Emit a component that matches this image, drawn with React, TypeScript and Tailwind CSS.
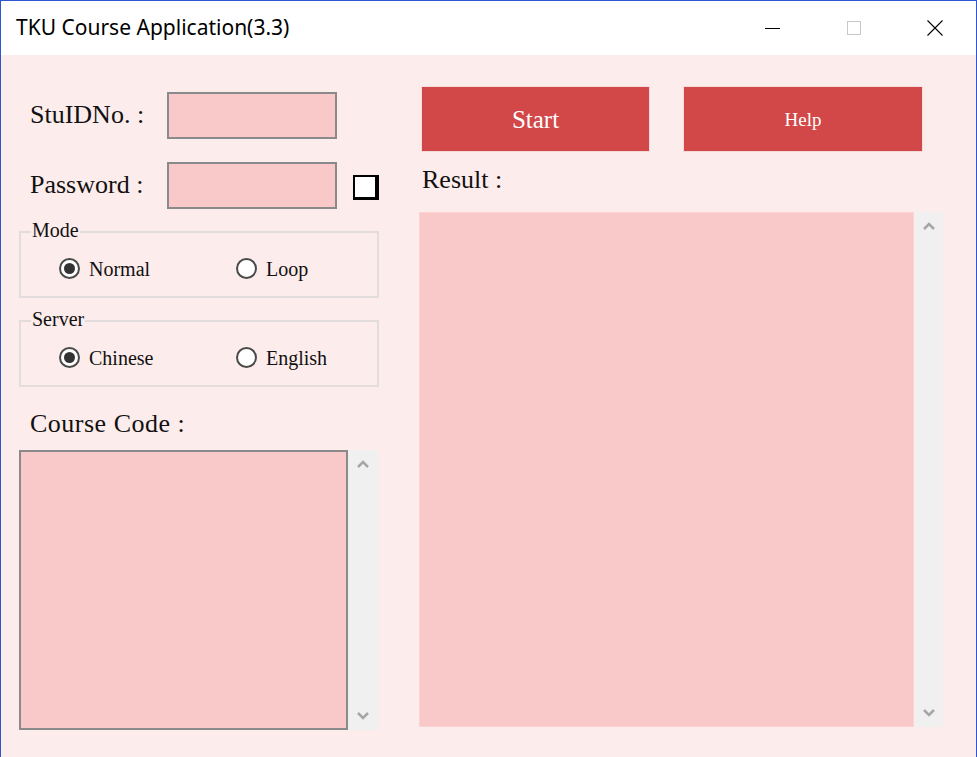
import React from "react";

const serif = { fontFamily: '"Liberation Serif", "Times New Roman", serif' };

function Radio({ checked, label }: { checked?: boolean; label: string }) {
  return (
    <div className="flex items-center">
      <div className="w-[21px] h-[21px] rounded-full border-2 border-[#4a4a4a] bg-white flex items-center justify-center">
        {checked && <div className="w-[11px] h-[11px] rounded-full bg-[#333333]" />}
      </div>
      <span className="ml-[9px] text-[20px] text-[#111] leading-none" style={serif}>
        {label}
      </span>
    </div>
  );
}

function Group({ title, a, b }: { title: string; a: string; b: string }) {
  return (
    <div className="relative h-[67px] border-2 border-[#e2dcdc]">
      <span
        className="absolute -top-[15px] left-[10px] bg-[#fdecec] px-[1px] text-[20px] leading-[24px] text-[#111]"
        style={serif}
      >
        {title}
      </span>
      <div className="flex pt-[25px] pl-[38px]">
        <div className="w-[177px]">
          <Radio checked label={a} />
        </div>
        <Radio label={b} />
      </div>
    </div>
  );
}

function ScrollBar({ w }: { w: string }) {
  return (
    <div className={`${w} bg-[#f0f0f0] flex flex-col items-center justify-between py-[9px]`}>
      <svg width="14" height="10" viewBox="0 0 14 10">
        <path d="M2 8 L7 3 L12 8" fill="none" stroke="#a6a6a6" strokeWidth="2.5" />
      </svg>
      <svg width="14" height="10" viewBox="0 0 14 10">
        <path d="M2 2 L7 7 L12 2" fill="none" stroke="#a6a6a6" strokeWidth="2.5" />
      </svg>
    </div>
  );
}

export default function App() {
  return (
    <div className="w-[977px] h-[757px] flex flex-col border-x border-t border-[#2f55d4] overflow-hidden">
      {/* Title bar */}
      <div className="h-[54px] bg-white flex items-center shrink-0">
        <span
          className="ml-[15px] text-[21px] text-black"
          style={{ fontFamily: '"Noto Sans", "Open Sans", sans-serif' }}
        >
          TKU Course Application(3.3)
        </span>
        <div className="ml-auto flex items-center">
          <div className="w-[81px] flex justify-center">
            <div className="w-[15px] h-[1px] bg-black" />
          </div>
          <div className="w-[81px] flex justify-center">
            <div className="w-[14px] h-[14px] border border-[#c8c8c8]" />
          </div>
          <div className="w-[81px] flex justify-center mr-[1px]">
            <svg width="16" height="16" viewBox="0 0 16 16">
              <path d="M0.5 0.5 L15.5 15.5 M15.5 0.5 L0.5 15.5" stroke="#000" strokeWidth="1.1" />
            </svg>
          </div>
        </div>
      </div>

      {/* Content */}
      <div className="flex-1 bg-[#fdecec] flex pl-[18px]">
        {/* Left column */}
        <div className="w-[360px] flex flex-col">
          <div className="flex items-center mt-[37px]">
            <span className="ml-[11px] w-[137px] text-[26px] text-[#111] leading-none -mt-[2px]" style={serif}>
              StuIDNo. :
            </span>
            <div className="w-[170px] h-[47px] bg-[#f9c8c8] border-2 border-[#8a8a8a]" />
          </div>
          <div className="flex items-center mt-[23px]">
            <span className="ml-[11px] w-[137px] text-[26px] text-[#111] leading-none -mt-[2px]" style={serif}>
              Password :
            </span>
            <div className="w-[170px] h-[47px] bg-[#f9c8c8] border-2 border-[#8a8a8a]" />
            <div className="ml-[16px] mt-[3px] w-[26px] h-[25px] bg-white border-2 border-black border-r-[4px] border-b-[3px]" />
          </div>
          <div className="mt-[22px]">
            <Group title="Mode" a="Normal" b="Loop" />
          </div>
          <div className="mt-[22px]">
            <Group title="Server" a="Chinese" b="English" />
          </div>
          <div
            className="mt-[23px] ml-[11px] text-[26px] leading-[28px] tracking-[0.5px] text-[#111]"
            style={serif}
          >
            Course Code :
          </div>
          <div className="mt-[12px] flex h-[280px]">
            <div className="w-[329px] bg-[#f9c8c8] border-2 border-[#8a8a8a]" />
            <ScrollBar w="w-[30px]" />
          </div>
        </div>

        {/* Right column */}
        <div className="ml-[40px] flex flex-col">
          <div className="flex mt-[31px]">
            <div className="ml-[2px] w-[229px] h-[66px] bg-[#d24848] border border-[#f6dada] flex items-center justify-center">
              <span className="text-white text-[25px] leading-none" style={serif}>
                Start
              </span>
            </div>
            <div className="ml-[33px] w-[240px] h-[66px] bg-[#d24848] border border-[#f6dada] flex items-center justify-center">
              <span className="text-white text-[19px] leading-none" style={serif}>
                Help
              </span>
            </div>
          </div>
          <div className="mt-[14px] ml-[3px] text-[26px] leading-[28px] text-[#111]" style={serif}>
            Result :
          </div>
          <div className="mt-[18px] flex h-[515px]">
            <div className="w-[495px] bg-[#f9c8c8] border border-[#fbd3d3]" />
            <div className="w-[1px]" />
            <ScrollBar w="w-[28px]" />
          </div>
        </div>
      </div>
    </div>
  );
}
